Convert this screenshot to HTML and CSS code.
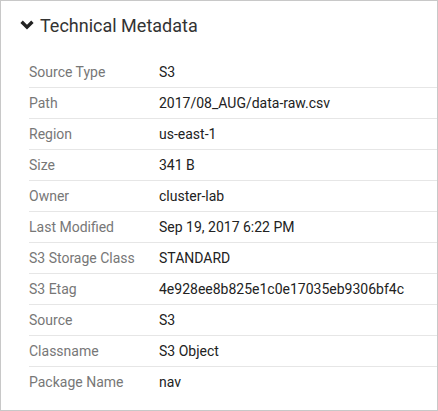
FILE: index.html
```html
<!DOCTYPE html>
<html>
<head>
<meta charset="utf-8">
<link rel="stylesheet" href="styles.css">
</head>
<body>
<div class="panel">
  <div class="panel-title">
    <svg class="chevron" width="14" height="10" viewBox="0 0 14 10"><path d="M1.6 1.8 L7 7.2 L12.4 1.8" fill="none" stroke="#222" stroke-width="3.4" stroke-linecap="butt" stroke-linejoin="miter"/></svg>
    <span>Technical Metadata</span>
  </div>
  <div class="meta-table">
    <div class="row"><div class="label">Source Type</div><div class="value">S3</div></div>
    <div class="row"><div class="label">Path</div><div class="value">2017/08_AUG/data-raw.csv</div></div>
    <div class="row"><div class="label">Region</div><div class="value">us-east-1</div></div>
    <div class="row"><div class="label">Size</div><div class="value">341 B</div></div>
    <div class="row"><div class="label">Owner</div><div class="value">cluster-lab</div></div>
    <div class="row"><div class="label">Last Modified</div><div class="value">Sep 19, 2017 6:22 PM</div></div>
    <div class="row"><div class="label">S3 Storage Class</div><div class="value">STANDARD</div></div>
    <div class="row"><div class="label">S3 Etag</div><div class="value">4e928ee8b825e1c0e17035eb9306bf4c</div></div>
    <div class="row"><div class="label">Source</div><div class="value">S3</div></div>
    <div class="row"><div class="label">Classname</div><div class="value">S3 Object</div></div>
    <div class="row"><div class="label">Package Name</div><div class="value">nav</div></div>
  </div>
</div>
</body>
</html>
```
FILE: styles.css
```css
html, body {
  margin: 0;
  padding: 0;
  background: #fff;
}
body {
  font-family: Roboto, "Liberation Sans", sans-serif;
}
.panel {
  width: 438px;
  height: 411px;
  box-sizing: border-box;
  border: 1px solid #c8c8c8;
  padding: 12px 0 0 0;
}
.panel-title {
  display: flex;
  align-items: center;
  gap: 6px;
  padding-left: 19px;
  height: 24px;
  font-size: 18px;
  color: #333;
}
.chevron {
  display: block;
  margin-top: 0;
}
.meta-table {
  margin-top: 20px;
  margin-left: 28px;
}
.row {
  display: flex;
  align-items: center;
  height: 30px;
  border-bottom: 1px solid #e6e6e6;
  font-size: 14px;
}
.row:last-child {
  border-bottom: none;
}
.label {
  width: 130px;
  color: #777;
}
.value {
  color: #222;
}
```
